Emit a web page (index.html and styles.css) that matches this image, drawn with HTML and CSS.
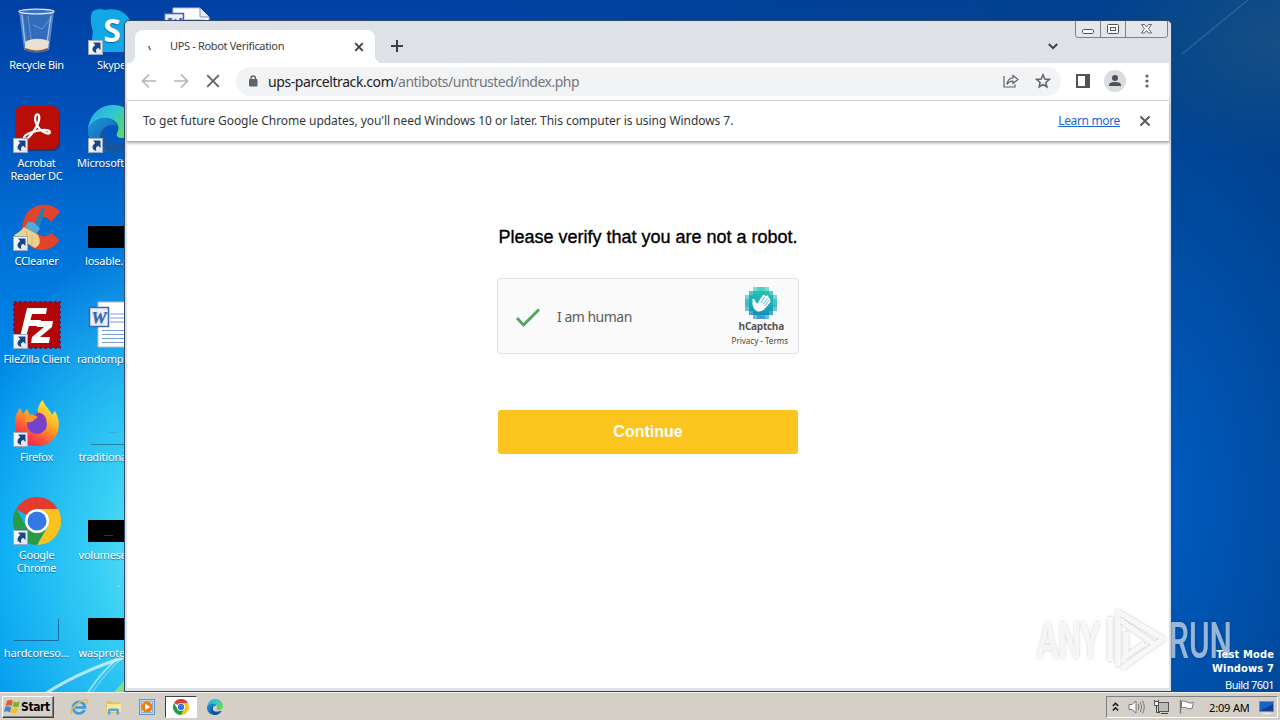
FILE: index.html
```html
<!DOCTYPE html>
<html lang="en">
<head>
<meta charset="utf-8">
<title>UPS - Robot Verification</title>
<link rel="stylesheet" href="styles.css">
</head>
<body>
<svg width="0" height="0" class="defs">
  <defs>
    <linearGradient id="arrowFace" x1="0" y1="0" x2="1" y2="1"><stop offset="0" stop-color="#fff"/><stop offset="1" stop-color="#dbe3ee"/></linearGradient>
    <symbol id="shortcut" viewBox="0 0 15 15">
      <rect x=".5" y=".5" width="14" height="14" fill="url(#arrowFace)" stroke="#9aa9c0"/>
      <path d="M5 2.500H12.500V10L10.200 7.700C8 8.700 7.300 10.500 8.500 13C4 12 3 8.500 7.200 5Z" fill="#1c4484"/>
    </symbol>
    <symbol id="chrome" viewBox="0 0 48 48">
      <path d="M24 24 3.200 12A24 24 0 0 1 44.800 12Z" fill="#e33b2e"/>
      <path d="M24 24V12H44.800A24 24 0 0 1 24 48L34.400 30Z" fill="#fcc31e"/>
      <path d="M24 24 34.400 30 24 48A24 24 0 0 1 3.200 12L13.600 30Z" fill="#2a9a48"/>
      <circle cx="24" cy="24" r="12" fill="#fff"/><circle cx="24" cy="24" r="9.500" fill="#3478e5"/>
    </symbol>
    <linearGradient id="edgeTop" x1="0" y1="0" x2="1" y2=".5"><stop offset="0" stop-color="#2ba9e4"/><stop offset=".5" stop-color="#30c5d3"/><stop offset="1" stop-color="#62d957"/></linearGradient>
    <linearGradient id="edgeLow" x1="0" y1="0" x2="1" y2="1"><stop offset="0" stop-color="#1f93dc"/><stop offset="1" stop-color="#0c4aa0"/></linearGradient>
    <symbol id="edge" viewBox="0 0 48 48">
      <path d="M0 24C2 9 12 0 25 0C39 0 48 10 48 21C48 29 42 33 35 33C29 33 28 31 29 28C34 20 26 13 17 13C9 13 3 18 0 24Z" fill="url(#edgeTop)"/>
      <path d="M0 24C3 17 9 13 17 13C23 13 28 17 29 21C22 18 17 22 17 29C17 36 25 42 44 36C38 44 31 48 24 48C10 48-1 38 0 24Z" fill="url(#edgeLow)"/>
      <path d="M29 21C22 18 17 22 17 29C17 36 25 42 44 36C38 44 31 48 24 48C15 45 11 38 12 31C13 23 21 18 29 21Z" fill="#14559f"/>
    </symbol>
    <symbol id="worddoc" viewBox="0 0 48 48">
      <path d="M10 1h27l9 9v36H10Z" fill="#fff" stroke="#b4bdd2"/>
      <path d="M37 1v9h9" fill="#e6ecf8" stroke="#7d91b8"/>
      <path d="M22 13h20M22 17h20M22 21h20M14 29.500h28M14 33.500h28M14 37.500h28M14 41.500h28" stroke="#7c9cd6"/>
      <rect x="1.500" y="6.500" width="19" height="19" fill="#e9f0fc" stroke="#3b65b0" stroke-width="1.500"/>
      <text x="11" y="21.500" font-family="Liberation Serif, serif" font-size="17" font-style="italic" font-weight="bold" text-anchor="middle" fill="#3663b2">W</text>
    </symbol>
  </defs>
</svg>

<div class="desktop">
  <svg class="wallpaper" width="1280" height="692" viewBox="0 0 1280 692">
    <g fill="none" stroke="#fff" stroke-linecap="round">
      <path d="M45 694C72 676 100 665 128 656" stroke-width="3" opacity=".65"/>
      <path d="M87 694C96 680 104 670 116 660" stroke-width="2" opacity=".5"/>
      <path d="M91 694C101 680 110 668 126 655" stroke-width="1.500" opacity=".3"/>
    </g>
    <path d="M114 692Q118 688 124 680V692Z" fill="#7be08a"/>
    <path d="M1182 54 1248 0" stroke="#4c88c0" stroke-width="1.500" opacity=".4"/>
    <path d="M118 586h2" stroke="#c8f5ff" opacity=".7"/>
  </svg>

  <div class="icons">
    <div class="item"><svg class="pic" viewBox="0 0 48 48">
      <path d="M6 4 11 43Q24 48 36 43L41 4Z" fill="#6c9bd0" opacity=".75"/>
      <path d="M10 7 14 35H33L37 7Z" fill="#245fb5" opacity=".65"/>
      <path d="M12 35Q22 29 36 34L35 42Q24 46 12 42Z" fill="#eadfd3"/>
      <path d="M12 42Q24 47 35 42" fill="none" stroke="#765f58" stroke-width="2"/>
      <ellipse cx="23.500" cy="4.500" rx="17.500" ry="2.300" fill="#3c73bd" stroke="#d9e4ef" stroke-width="1.300"/>
      <path d="M9 8 12 36M38 9 34 36" fill="none" stroke="#cfe0f2" opacity=".7"/>
      <path d="M15 9 18 32M37 12 29 22 20 18" fill="none" stroke="#8fb4de" opacity=".6"/>
    </svg><span>Recycle Bin</span></div>
    <div class="item"><svg class="pic" viewBox="0 0 48 48">
      <rect x="4" y="4" width="43" height="42" rx="7" fill="#3a1830" opacity=".5"/>
      <rect x="2" y="1" width="44" height="43" rx="7" fill="#b90d07"/>
      <path d="M23 10C27 7 28 15 22 24 18 31 13 36 11 33 11 29 23 25 31 25 39 25 38 30 33 28 26 26 20 16 23 10Z" fill="none" stroke="#fff" stroke-width="2.300"/>
    </svg><svg class="arrow"><use href="#shortcut"/></svg><span>Acrobat Reader DC</span></div>
    <div class="item"><svg class="pic" viewBox="0 -2 48 48">
      <path d="M47 7C39-3 23-2 15 7 6 18 8 35 17 41 27 49 41 44 47 35L38 28C33 33 28 32 24 27 20 20 25 12 31 12 35 12 36 15 38 17Z" fill="#e4432b"/>
      <path d="M29 3 32 4 26 24 20 21Z" fill="#267eb6"/><path d="M15 17Q21 15 27 24L22 30 12 22Z" fill="#55a9d9"/>
      <path d="M11 22 25 30Q30 39 22 43L1 30Q6 28 11 22Z" fill="#ecd28f"/><path d="M14 26 13 36M19 29 19 40" stroke="#d9b56e"/>
    </svg><svg class="arrow"><use href="#shortcut"/></svg><span>CCleaner</span></div>
    <div class="item"><svg class="pic" viewBox="0 0 48 48">
      <rect x="1" y="1" width="46" height="46" fill="#b30507"/><rect x="1" y="1" width="46" height="46" fill="none" stroke="#6e1740" stroke-width="2.500" stroke-dasharray="2.500 2.500"/>
      <path d="M14 7H34L33 13H19L17.500 19H28L26.500 25H16L13 36H7Z" fill="#fff"/>
      <path d="M25 20H40L39 26 27 36H37L36 42H18L19 36 31 26H24Z" fill="#fff"/>
    </svg><svg class="arrow"><use href="#shortcut"/></svg><span>FileZilla Client</span></div>
    <div class="item"><svg class="pic" viewBox="0 0 48 48">
      <defs><linearGradient id="fox" x1=".8" y1="0" x2=".2" y2="1"><stop offset="0" stop-color="#fff04a"/><stop offset=".4" stop-color="#ffae24"/><stop offset=".7" stop-color="#ff5538"/><stop offset="1" stop-color="#e4195f"/></linearGradient></defs>
      <path d="M7 9 10 15 14 10 17 16 25 15C24 9 27 3 30 1 31 7 37 10 39 16L42 12C52 30 41 47 24 47 9 47 1 36 2 23 2 17 4 13 7 9Z" fill="url(#fox)"/>
      <circle cx="24" cy="25" r="10" fill="#7344cb"/><path d="M13 17Q19 14 25 18 22 20 20 22 17 24 12 23Z" fill="#ff9624"/><path d="M23 14Q31 12 34 22 30 18 25 18Z" fill="#9734b5"/>
    </svg><svg class="arrow"><use href="#shortcut"/></svg><span>Firefox</span></div>
    <div class="item"><svg class="pic"><use href="#chrome"/></svg><svg class="arrow"><use href="#shortcut"/></svg><span>Google Chrome</span></div>
    <div class="item"><svg class="pic" viewBox="0 0 48 48"><path d="M1 45.500H45.500V24" fill="none" stroke="#176da4"/></svg><span>hardcoreso...</span></div>

    <div class="item"><svg class="pic" viewBox="0 0 48 48">
      <path d="M4 5Q9 0 17 3 35-1 43 15 47 24 42 31 48 46 31 45H14Q1 43 5 25 1 13 4 5Z" fill="#12a7e5"/>
      <text x="24" y="35" font-family="Open Sans, sans-serif" font-size="32" font-weight="bold" text-anchor="middle" fill="#fff">S</text>
    </svg><svg class="arrow"><use href="#shortcut"/></svg><span>Skype</span></div>
    <div class="item"><svg class="pic"><use href="#edge"/></svg><svg class="arrow"><use href="#shortcut"/></svg><span class="from-left">Microsoft Edge</span></div>
    <div class="item"><svg class="pic" viewBox="0 0 48 48"><path d="M0 23H48V45H0Z"/></svg><span class="from-left short">losable.png</span></div>
    <div class="item"><svg class="pic"><use href="#worddoc"/></svg><span class="from-left">randompu...</span></div>
    <div class="item"><svg class="pic" viewBox="0 0 48 48"><path d="M3 45.500H48" stroke="#25839f"/><path d="M20 33.500h9" stroke="#35a5bf" opacity=".6"/></svg><span class="from-left inset">traditiona...</span></div>
    <div class="item"><svg class="pic" viewBox="0 0 48 48"><path d="M0 23H48V45H0Z"/><path d="M16 38.500h9" stroke="#17404b"/></svg><span class="from-left inset">volumese...</span></div>
    <div class="item"><svg class="pic" viewBox="0 0 48 48"><path d="M0 23H48V45H0Z"/></svg><span class="from-left inset">wasprote...</span></div>

    <div class="item third"><svg class="pic"><use href="#worddoc"/></svg></div>
  </div>

  <div class="build"><b>Test Mode</b><b>Windows 7</b><span>Build 7601</span></div>

  <div class="window">
    <div class="strip">
      <div class="tab"><svg width="8" height="10" viewBox="0 0 8 10"><path d="M3 4Q3 6 4.500 8" stroke="#3c64d0" stroke-width="1.500" fill="none"/></svg><span>UPS - Robot Verification</span><svg width="10" height="10" viewBox="0 0 10 10"><path d="M1.200 1.200 8.800 8.800M8.800 1.200 1.200 8.800" stroke="#3c4043" stroke-width="1.800"/></svg></div>
      <svg class="plus" width="12" height="12" viewBox="0 0 12 12"><path d="M6 0V12M0 6H12" stroke="#3c4043" stroke-width="2"/></svg>
      <svg class="chev" width="10" height="7" viewBox="0 0 10 7"><path d="M.8 1 5 5.200 9.200 1" fill="none" stroke="#3c4043" stroke-width="2"/></svg>
      <svg class="caption" width="93" height="18" viewBox="0 0 93 18">
        <path d="M.5 0V14.500Q.5 16.500 3.500 16.500H89.500Q92.500 16.500 92.500 14.500V0M25.500 0V16M50.500 0V16" fill="#e5e6eb" stroke="#7d8189"/>
        <rect x="7.500" y="8.500" width="11" height="4" rx="1.200" fill="#fff" stroke="#50555c"/>
        <rect x="32.500" y="3.500" width="11" height="9" rx="1" fill="#fff" stroke="#50555c"/><rect x="35.500" y="6.500" width="5" height="3" fill="#fff" stroke="#50555c"/>
        <path d="M66.500 3.500h3l2 2.500 2-2.500h3l-3 4.200 3 4.300h-3l-2-2.500-2 2.500h-3l3-4.300Z" fill="#fff" stroke="#50555c" stroke-width=".9"/>
      </svg>
    </div>
    <div class="toolbar">
      <svg width="16" height="16" viewBox="0 0 16 16"><path d="M15 8H2M8 1.500 1.500 8 8 14.500" fill="none" stroke="#b3b5b8" stroke-width="1.700"/></svg>
      <svg width="16" height="16" viewBox="0 0 16 16"><path d="M1 8H14M8 1.500 14.500 8 8 14.500" fill="none" stroke="#b3b5b8" stroke-width="1.700"/></svg>
      <svg width="16" height="16" viewBox="0 0 16 16"><path d="M2.200 2.200 13.800 13.800M13.800 2.200 2.200 13.800" stroke="#5b5e62" stroke-width="1.700"/></svg>
      <div class="omnibox">
        <svg width="10" height="12" viewBox="0 0 10 12"><rect x="1" y="4" width="8.500" height="7.500" rx="1" fill="#5f6368"/><path d="M3 5V3.200a2.200 2.200 0 0 1 4.500 0V5" fill="none" stroke="#5f6368" stroke-width="1.400"/></svg>
        <span class="url"><span class="host">ups-parceltrack.com</span>/antibots/untrusted/index.php</span>
        <svg width="16" height="16" viewBox="0 0 16 16"><path d="M1 3V14H12V11.500" fill="none" stroke="#5f6368" stroke-width="1.200"/><path d="M10 2.500 15 6.500 10 10.500V8.200Q6 8 4 11.500 4.500 5.500 10 4.800Z" fill="none" stroke="#5f6368" stroke-width="1.200"/></svg>
        <svg width="16" height="16" viewBox="0 0 16 16"><path d="M8 1.800 9.800 6 14.300 6.400 10.900 9.400 11.900 13.900 8 11.500 4.100 13.900 5.100 9.400 1.700 6.400 6.200 6Z" fill="none" stroke="#5f6368" stroke-width="1.500"/></svg>
      </div>
      <svg class="panel" width="14" height="14" viewBox="0 0 14 14"><path d="M0 0H14V14H0ZM2 2V12H9V2Z" fill="#515459" fill-rule="evenodd"/></svg>
      <svg class="avatar" width="22" height="22" viewBox="0 0 22 22"><circle cx="11" cy="11" r="11" fill="#dadce2"/><circle cx="11" cy="8" r="3" fill="#4d5158"/><path d="M5 16V15Q5 12 11 12T17 15V16Z" fill="#4d5158"/></svg>
      <svg class="dots" width="4" height="14" viewBox="0 0 4 14"><g fill="#5f6368"><circle cx="2" cy="2" r="1.600"/><circle cx="2" cy="7" r="1.600"/><circle cx="2" cy="12" r="1.600"/></g></svg>
    </div>
    <div class="infobar"><span class="msg">To get future Google Chrome updates, you'll need Windows 10 or later. This computer is using Windows 7.</span><a class="more">Learn more</a><svg width="12" height="12" viewBox="0 0 12 12"><path d="M1.500 1.500 10.500 10.500M10.500 1.500 1.500 10.500" stroke="#55585d" stroke-width="1.900"/></svg></div>
    <div class="page">
      <h1><span>Please verify that you are not a robot.</span></h1>
      <div class="captcha">
        <svg class="check" width="24" height="20" viewBox="0 0 24 20"><path d="M1 10 7.500 17 23 1.500" fill="none" stroke="#4aa857" stroke-width="2.800"/></svg>
        <span class="human">I am human</span>
        <div class="brand">
          <svg class="logo" width="32" height="32" viewBox="0 0 32 32">
            <defs><linearGradient id="tiles" x1=".3" y1="0" x2=".2" y2="1"><stop offset="0" stop-color="#25c6b4"/><stop offset=".5" stop-color="#1bacba"/><stop offset="1" stop-color="#0b83bd"/></linearGradient></defs>
            <path d="M8 0H24V4H28V8H32V24H28V28H24V32H8V28H4V24H0V8H4V4H8Z" fill="url(#tiles)"/>
            <g fill="#fff"><path d="M8 0h4v4H8zM20 0h4v4h-4zM0 8h4v4H0zM28 8h4v4h-4zM0 20h4v4H0zM28 20h4v4h-4zM8 28h4v4H8zM20 28h4v4h-4z" opacity=".4"/><path d="M12 0h8v4h-8zM4 4h4v4H4zM24 4h4v4h-4zM0 12h4v8H0zM28 12h4v8h-4zM4 24h4v4H4zM24 24h4v4h-4zM12 28h8v4h-8z" opacity=".2"/></g>
            <path d="M7.500 12Q9 11 10.300 14L12 17 18 8Q19.800 7 20 9L22 8.500Q23.800 8.500 23.500 10.500 25.500 11 24.500 13 26.300 13.500 25 15.500L20 21.500Q16 26 11.500 24 8 22 7.500 17Z" fill="#fff"/>
            <path d="M19.800 10 16 16M22.500 11.500 18 17.500M24 13.500 19.500 19" stroke="#19a7bb" stroke-width=".8"/>
          </svg>
          <b>hCaptcha</b><small>Privacy - Terms</small>
        </div>
      </div>
      <button class="continue"><span>Continue</span></button>
    </div>
  </div>

  <svg class="watermark" width="204" height="72" viewBox="-4 -4 204 72">
    <defs><filter id="soft" x="-20%" y="-20%" width="140%" height="140%"><feDropShadow dx="0" dy="0" stdDeviation="1.500" flood-color="#000" flood-opacity=".4"/></filter></defs>
    <g filter="url(#soft)">
      <g font-family="Roboto, sans-serif" font-size="50" font-weight="500" fill="#fff" opacity=".55">
        <text x="1" y="50" textLength="63" lengthAdjust="spacingAndGlyphs">ANY</text>
        <text x="133" y="50" textLength="63" lengthAdjust="spacingAndGlyphs">RUN</text>
      </g>
      <path d="M74 9V53M82 58V4L127 31 86 60M84 12 118 36M90 24V48L108 36" fill="none" stroke="#fff" stroke-width="4.500" stroke-linejoin="round" opacity=".75"/>
    </g>
  </svg>
</div>

<div class="taskbar">
  <div class="start"><svg width="17" height="16" viewBox="0 0 17 16"><path d="M3 2Q6 0 9 2L7.500 7Q5 5.500 1.500 7Z" fill="#e3582b"/><path d="M10 2.500Q13 4 16 2L14.500 7.500Q12 9 8.500 7.500Z" fill="#7bb52f"/><path d="M1.200 8Q4 6.500 7.200 8.200L6 13.500Q3 11.500 0 13Z" fill="#3c86d2"/><path d="M8.200 8.800Q11 10 14.200 8.500L12.800 13.500Q10 15.500 6.800 13.800Z" fill="#f7bd22"/></svg><b>Start</b></div>
  <div class="slot"><svg width="18" height="16" viewBox="0 0 18 16"><path d="M14.500 11A6 5.800 0 1 1 15 8.500H5" fill="none" stroke="#3d9bdd" stroke-width="2.600"/><path d="M2 15Q-1 11 7 5 15-1 17 1 18 3 15.500 5" fill="none" stroke="#e6bd3f" stroke-width="1.500"/></svg></div>
  <div class="slot"><svg width="17" height="15" viewBox="0 0 17 15"><path d="M1 1H7L8.500 2.500H15V13H1Z" fill="#e5c262"/><path d="M2 4H16V12H2Z" fill="#f9e79b"/><path d="M3 14.500V10Q3 8.500 5 8.500H12Q14 8.500 14 10V14.500H11.500V11H5.500V14.500Z" fill="#5aa6d4"/></svg></div>
  <div class="slot"><svg width="16" height="16" viewBox="0 0 16 16"><rect x=".5" y=".5" width="15" height="15" fill="#b9d8f2" stroke="#6496ca"/><rect x="2.500" y="2.500" width="11" height="11" fill="#dcecf8" stroke="#85b3dc"/><circle cx="8" cy="8" r="5.600" fill="#ee7d13"/><path d="M6.200 4.800 11.200 8 6.200 11.200Z" fill="#fff"/></svg></div>
  <div class="slot active"><svg width="16" height="16"><use href="#chrome"/></svg></div>
  <div class="slot"><svg width="16" height="16"><use href="#edge"/></svg></div>
  <div class="tray">
    <svg width="7" height="10" viewBox="0 0 7 10"><path d="M.8 4 3.500 1.300 6.200 4M.8 8.500 3.500 5.800 6.200 8.500" fill="none" stroke="#111" stroke-width="1.500"/></svg>
    <svg width="17" height="16" viewBox="0 0 17 16"><path d="M1 5.500H4L8 2V14L4 10.500H1Z" fill="#fff" stroke="#777"/><path d="M10 5Q12 8 10 11M12.300 3Q15 8 12.300 13M14.500 1.500Q18 8 14.500 14.500" fill="none" stroke="#777"/></svg>
    <svg width="17" height="16" viewBox="0 0 17 16"><rect x="5.500" y="3.500" width="10" height="9" fill="#bbb" stroke="#555"/><path d="M8 14.500h7" stroke="#444"/><path d="M1.500 1V4.500H5.500V1M3.500 4.500V13.500H7" fill="none" stroke="#444"/><rect x="1.500" y="2.500" width="4" height="4" fill="#fff" stroke="#555"/></svg>
    <svg width="17" height="16" viewBox="0 0 17 16"><path d="M2.500 1V14.500" stroke="#777" stroke-width="1.400"/><path d="M3.500 2.500Q6 1 9 3T15.500 3.500L14 9.500Q11 10.500 8.500 9T3.500 9Z" fill="#fff" stroke="#777"/></svg>
    <span class="clock">2:09 AM</span>
    <svg width="15" height="13" viewBox="0 0 15 13"><rect x=".5" y=".5" width="14" height="10" fill="#1663c5" stroke="#6591c9"/><path d="M1 10 14 3V10Z" fill="#123f92"/><path d="M4 12.500h8" stroke="#eef"/></svg>
  </div>
</div>
</body>
</html>
```
FILE: styles.css
```css
* { box-sizing: border-box; }
body {
  margin: 0;
  width: 1280px;
  height: 720px;
  overflow: hidden;
  display: flex;
  flex-direction: column;
  font-family: "Noto Sans", "DejaVu Sans", sans-serif;
  font-size: 11px;
}
svg { display: block; flex: none; }
.defs { position: absolute; }

.desktop {
  position: relative;
  height: 692px;
  background:
    radial-gradient(ellipse 200px 320px at 165px 550px, #66e4f6 0%, rgba(64, 214, 244, .85) 35%, rgba(20, 170, 244, 0) 100%),
    radial-gradient(ellipse 240px 420px at 1130px 500px, rgba(0, 98, 205, .9), rgba(0, 80, 180, 0)),
    radial-gradient(ellipse 180px 120px at 1280px 40px, rgba(24, 80, 130, .9), rgba(20, 70, 130, 0)),
    linear-gradient(90deg, transparent 0 400px, #00428f 1100px),
    linear-gradient(180deg, #0040a3 0, #0052bb 120px, #0069d0 200px, #007fe2 310px, #0094ee 430px, #00a4f5 560px, #0098ee 692px);
}
.wallpaper { position: absolute; inset: 0; }

.icons {
  display: grid;
  grid-auto-flow: column;
  grid-template-rows: repeat(7, 98px);
  grid-auto-columns: 73px;
  column-gap: 2px;
  color: #fff;
}
.item {
  position: relative;
  display: flex;
  flex-direction: column;
  align-items: center;
  padding-top: 7px;
  text-align: center;
  line-height: 13px;
  letter-spacing: -.3px;
  text-shadow: 0 1px 1px rgba(0, 30, 80, .5);
}
.item span { width: 66px; margin-top: 3px; display: flex; justify-content: center; white-space: nowrap; }
.item:nth-child(2) span, .item:nth-child(6) span { white-space: normal; width: 56px; }
.item:nth-child(7) span { letter-spacing: -.15px; }
.pic { width: 48px; height: 48px; }
.arrow { position: absolute; left: 13px; top: 40px; width: 15px; height: 15px; }
.item .from-left { justify-content: flex-start; width: 69px; letter-spacing: -.2px; }
.item .inset { width: 66px; }
.item .short { width: 53px; }

.build {
  position: absolute;
  right: 6px;
  bottom: -2px;
  display: flex;
  flex-direction: column;
  align-items: flex-end;
  color: #fff;
  line-height: 14px;
}
.build b { font-family: "DejaVu Sans Condensed", "DejaVu Sans", sans-serif; font-size: 11px; letter-spacing: .15px; }
.build span { line-height: 18px; letter-spacing: -.55px; }

.window {
  position: absolute;
  left: 124px;
  top: 20px;
  width: 1048px;
  height: 672px;
  border: 1px solid #30476a;
  border-radius: 5px 5px 0 0;
  background: #dee1e6;
  padding: 0 2px 3px;
  display: flex;
  flex-direction: column;
}
.strip { height: 42px; display: flex; align-items: flex-start; }
.tab {
  position: relative;
  margin: 9px 0 0 8px;
  width: 240px;
  height: 33px;
  padding: 0 11px;
  border-radius: 8px 8px 0 0;
  background: #fff;
  display: flex;
  align-items: center;
  color: #3c4043;
}
.tab::before, .tab::after {
  content: "";
  position: absolute;
  bottom: 0;
  width: 8px;
  height: 8px;
}
.tab::before { left: -8px; background: radial-gradient(circle at 0 0, transparent 8px, #fff 8.500px); }
.tab::after { right: -8px; background: radial-gradient(circle at 100% 0, transparent 8px, #fff 8.500px); }
.tab span { margin: -2px auto 0 16px; letter-spacing: -.33px; }
.plus { margin: 19px 0 0 16px; }
.chev { margin: 22px 0 0 auto; }
.caption { margin: 0 1px 0 17px; }

.toolbar {
  height: 38px;
  padding: 0 16px 1px 14px;
  background: #fff;
  border-bottom: 1px solid #dadce0;
  display: flex;
  align-items: center;
  gap: 16px;
}
.omnibox {
  flex: 1;
  height: 29px;
  margin-left: -1px;
  padding: 0 10px 0 12px;
  border-radius: 15px;
  background: #f1f3f4;
  display: flex;
  align-items: center;
  gap: 16px;
}
.url { margin: 0 auto 0 -6px; font-size: 14px; letter-spacing: -.5px; color: #74777c; white-space: nowrap; }
.host { color: #202124; letter-spacing: -.42px; }
.panel { margin-left: -1px; }
.avatar { margin-left: -2px; }
.dots { margin: 0 4px 0 3px; }

.infobar {
  position: relative;
  z-index: 1;
  height: 41px;
  padding: 0 18px 1px 16px;
  background: #fff;
  border-bottom: 1px solid #b0b0b0;
  box-shadow: 0 1px 3px rgba(0, 0, 0, .35);
  display: flex;
  align-items: center;
  font-size: 12px;
  letter-spacing: -.05px;
  color: #333639;
}
.more { margin: 0 19px 0 auto; color: #1967d2; text-decoration: underline; letter-spacing: -.35px; }

.page {
  flex: 1;
  background: #fff;
  display: flex;
  flex-direction: column;
  align-items: center;
  font-family: "Liberation Sans", Arial, sans-serif;
}
.page h1 {
  margin: 84px 0 0;
  font-size: 18px;
  font-weight: 400;
  line-height: 22px;
  -webkit-text-stroke: .35px #000;
}
.captcha {
  width: 302px;
  height: 76px;
  margin-top: 30px;
  padding: 0 10px 0 18px;
  border: 1px solid #e0e0e0;
  border-radius: 4px;
  background: #fafafa;
  display: flex;
  align-items: center;
  font-family: "Noto Sans", sans-serif;
}
.check { margin-top: 3px; }
.human { margin: 0 auto 0 17px; font-size: 14px; letter-spacing: -.5px; color: #5c5c5c; }
.brand { display: flex; flex-direction: column; align-items: center; padding-top: 1px; }
.logo { margin-left: 3px; }
.brand b { margin-left: 3px; font-family: "Open Sans", sans-serif; font-size: 10px; letter-spacing: -.25px; line-height: 15px; color: #555; }
.brand small { font-size: 8px; line-height: 13px; color: #444; }
.continue {
  width: 300px;
  height: 44px;
  margin-top: 56px;
  border: 0;
  border-radius: 3px;
  background: #fcc41e;
  color: #fff;
  font: bold 16px "Liberation Sans", Arial, sans-serif;
}

.watermark { position: absolute; left: 1032px; top: 604px; }

.taskbar {
  height: 28px;
  padding: 1px 2px 0;
  background: #d4d0c8;
  border-top: 1px solid #f4f2ee;
  display: flex;
  align-items: center;
}
.start {
  width: 52px;
  height: 22px;
  margin-right: 8px;
  padding-left: 1px;
  border: 1px solid;
  border-color: #fff #404040 #404040 #fff;
  box-shadow: inset -1px -1px #808080;
  display: flex;
  align-items: center;
  font-family: "DejaVu Sans Condensed", "DejaVu Sans", sans-serif;
  font-size: 12px;
  letter-spacing: -.4px;
}
.slot { width: 34px; height: 22px; display: grid; place-items: center; }
.active { width: 32px; margin: 0 1px; background: #fff; border: 1px solid #808080; border-color: #404040 #fff #fff #404040; }
.tray {
  margin-left: auto;
  height: 22px;
  width: 172px;
  padding: 0 0 0 5px;
  border: 1px solid;
  border-color: #808080 #fff #fff #808080;
  display: flex;
  align-items: center;
  gap: 8px;
}
.tray svg:first-child { margin-right: 1px; }
.clock { margin: 0 1px 0 6px; white-space: nowrap; letter-spacing: -.15px; }
```
